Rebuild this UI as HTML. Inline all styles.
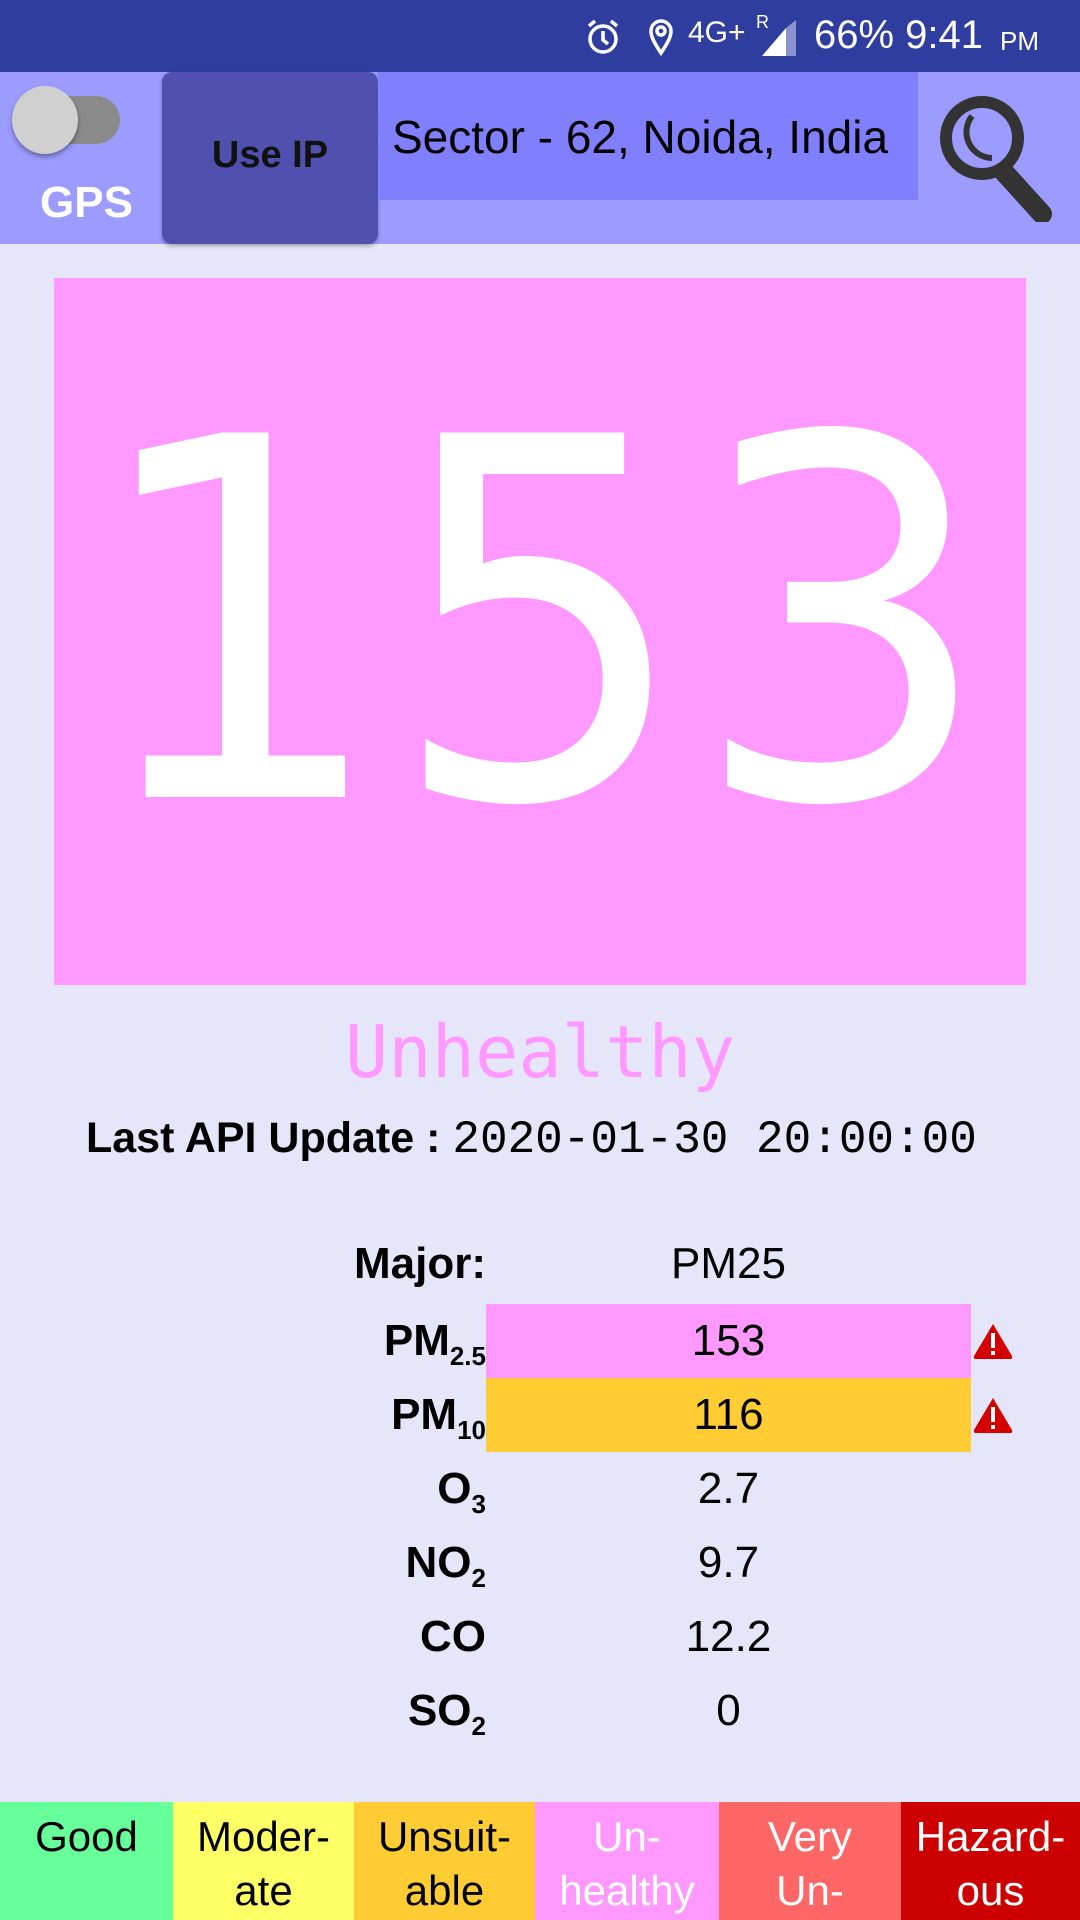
<!DOCTYPE html>
<html><head><meta charset="utf-8"><style>
*{margin:0;padding:0;box-sizing:border-box}
body{width:1080px;height:1920px;background:#e6e6fa;position:relative;overflow:hidden;font-family:"Liberation Sans Narrow","Liberation Sans",sans-serif}
.a{position:absolute}
.sb{left:0;top:0;width:1080px;height:72px;background:#2f3e9e;color:#fff}
.hd{left:0;top:72px;width:1080px;height:172px;background:#9c9cff}
.row{position:absolute;left:0;width:1080px;height:74px;font-size:44px;line-height:74px}
.lab{position:absolute;right:594px;font-weight:bold;text-align:right}
.val{position:absolute;left:486px;width:485px;text-align:center}
sub{font-size:26px;vertical-align:-10px}
.lg{position:absolute;top:1802px;height:118px;font-size:42px;line-height:54px;text-align:center;padding-top:8px}
</style></head><body>
<div class="a sb">
 <svg class="a" style="left:584px;top:18px" width="38" height="38" viewBox="0 0 38 38" fill="none" stroke="#fff" stroke-width="3.5"><circle cx="19" cy="21" r="13"/><path d="M19 13v9l5 4M5 8l6-5M33 8l-6-5"/></svg>
 <svg class="a" style="left:648px;top:18px" width="26" height="38" viewBox="0 0 26 38" fill="none" stroke="#fff" stroke-width="3.5"><path d="M13 35C5 23 3 18 3 13a10 10 0 0 1 20 0c0 5-2 10-10 22z"/><circle cx="13" cy="13" r="4"/></svg>
 <div class="a" style="left:688px;top:16px;font-size:30px">4G+</div>
 <div class="a" style="left:756px;top:12px;font-size:18px">R</div>
 <svg class="a" style="left:762px;top:20px" width="36" height="36"><polygon points="0,36 24,8 24,36" fill="#fff"/><polygon points="24,8 34,0 34,36 24,36" fill="#8a93d0"/></svg>
 <div class="a" style="left:814px;top:13px;font-size:40px">66%&nbsp;9:41</div>
 <div class="a" style="left:1000px;top:26px;font-size:26px">PM</div>
</div>
<div class="a hd"></div>
<div class="a" style="left:30px;top:96px;width:90px;height:48px;border-radius:24px;background:#8a8a8a"></div>
<div class="a" style="left:12px;top:86px;width:66px;height:68px;border-radius:50%;background:#d0d0d0;box-shadow:0 3px 5px rgba(0,0,0,.35)"></div>
<div class="a" style="left:40px;top:178px;font-size:44px;font-weight:bold;color:#fff">GPS</div>
<div class="a" style="left:162px;top:72px;width:216px;height:172px;background:#5050ae;border-radius:10px;box-shadow:0 2px 4px rgba(0,0,0,.3)"></div>
<div class="a" style="left:162px;top:134px;width:216px;text-align:center;font-size:38px;font-weight:bold;color:#111">Use IP</div>
<div class="a" style="left:378px;top:72px;width:540px;height:128px;background:#8080ff"></div>
<div class="a" style="left:392px;top:110px;font-size:46px;color:#000">Sector - 62, Noida, India</div>
<svg class="a" style="left:936px;top:92px" width="130" height="130" viewBox="0 0 130 130"><circle cx="46" cy="46" r="36" fill="none" stroke="#333" stroke-width="12"/><path d="M36 24a26 26 0 0 0 20 42" fill="none" stroke="#333" stroke-width="6"/><path d="M68 80l38 42" stroke="#333" stroke-width="20" stroke-linecap="round"/></svg>
<div class="a" style="left:54px;top:278px;width:972px;height:707px;background:#ff99ff"></div>
<div class="a" style="left:54px;top:324px;width:972px;text-align:center;font-size:500px;line-height:600px;color:#fff;font-family:'DejaVu Sans',sans-serif;transform:scaleX(0.95)">153</div>
<div class="a" style="left:0;top:1010px;width:1080px;text-align:center;font-size:72px;color:#ff99ff;font-family:'DejaVu Sans Mono','Liberation Mono',monospace">Unhealthy</div>
<div class="a" style="left:86px;top:1114px;font-size:43px;white-space:nowrap"><b>Last API Update :</b> <span style="font-family:'Liberation Mono',monospace;font-size:46px">2020-01-30 20:00:00</span></div>
<div class="a" style="left:486px;top:1304px;width:485px;height:74px;background:#ff99ff"></div>
<div class="a" style="left:486px;top:1378px;width:485px;height:74px;background:#ffcc33"></div>
<div class="row" style="top:1227px"><span class="lab">Major:</span><span class="val">PM25</span></div>
<div class="row" style="top:1304px"><span class="lab">PM<sub>2.5</sub></span><span class="val">153</span></div>
<div class="row" style="top:1378px"><span class="lab">PM<sub>10</sub></span><span class="val">116</span></div>
<div class="row" style="top:1452px"><span class="lab">O<sub>3</sub></span><span class="val">2.7</span></div>
<div class="row" style="top:1526px"><span class="lab">NO<sub>2</sub></span><span class="val">9.7</span></div>
<div class="row" style="top:1600px"><span class="lab">CO</span><span class="val">12.2</span></div>
<div class="row" style="top:1674px"><span class="lab">SO<sub>2</sub></span><span class="val">0</span></div>
<svg class="a" style="left:972px;top:1322px" width="42" height="38" viewBox="0 0 42 38"><path d="M21 2L40 34q1 3-2 3H4q-3 0-2-3z" fill="#d40000"/><rect x="19" y="11" width="4" height="15" fill="#fff"/><rect x="19" y="29" width="4" height="4" fill="#fff"/></svg>
<svg class="a" style="left:972px;top:1396px" width="42" height="38" viewBox="0 0 42 38"><path d="M21 2L40 34q1 3-2 3H4q-3 0-2-3z" fill="#d40000"/><rect x="19" y="11" width="4" height="15" fill="#fff"/><rect x="19" y="29" width="4" height="4" fill="#fff"/></svg>
<div class="lg" style="left:0;width:173px;background:#66ff99">Good</div>
<div class="lg" style="left:173px;width:181px;background:#ffff66">Moder-<br>ate</div>
<div class="lg" style="left:354px;width:181px;background:#ffcc33">Unsuit-<br>able</div>
<div class="lg" style="left:535px;width:184px;background:#ff99ff;color:#fff">Un-<br>healthy</div>
<div class="lg" style="left:719px;width:182px;background:#ff6666;color:#fff">Very<br>Un-</div>
<div class="lg" style="left:901px;width:179px;background:#cc0000;color:#fff">Hazard-<br>ous</div>
</body></html>
